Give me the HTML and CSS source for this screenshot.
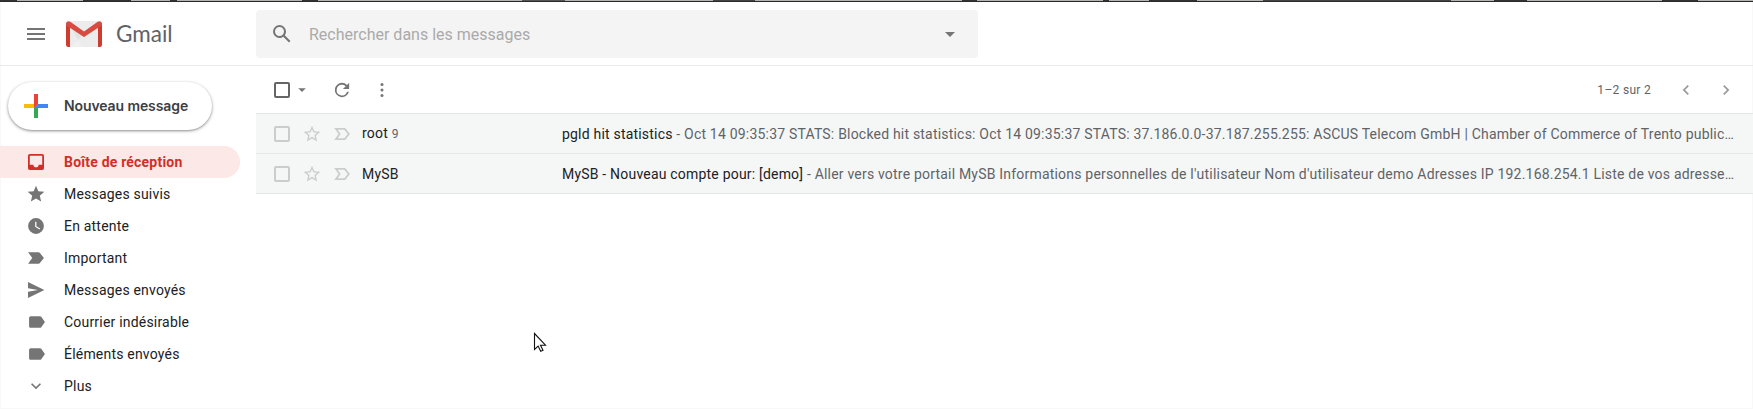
FILE: index.html
```html
<!DOCTYPE html>
<html lang="fr">
<head>
<meta charset="utf-8">
<title>Gmail</title>
<link rel="stylesheet" href="styles.css">
</head>
<body>
<div class="app">
  <div class="strip"></div>
  <header class="header">
    <div class="brand">
      <svg class="burger" width="24" height="24" viewBox="0 0 24 24"><path d="M3 18h18v-2H3v2zm0-5h18v-2H3v2zm0-7v2h18V6H3z"/></svg>
      <svg class="logo" width="36" height="26" viewBox="0 0 36 26">
        <rect x="1" y="0" width="34" height="26" rx="1.500" fill="#ececec"/>
        <path d="M4 26l14-11 14 11z" fill="#f3f3f3"/>
        <path d="M18 15l14 11H16L5 6z" fill="#e2e2e2"/>
        <path d="M4 26l12-11 2 1 2-1 12 11z" fill="#efefef" opacity=".8"/>
        <path d="M0 3v20.500A2.500 2.500 0 0 0 2.500 26H4V5zM36 3v20.500a2.500 2.500 0 0 1-2.500 2.500H32V5z" fill="#ce3c30"/>
        <path d="M0 2.800C0 .3 2.600-.5 4.300.8L18 10.500 31.700.8C33.400-.5 36 .3 36 2.800c0 1-.5 1.800-1.200 2.300L18 16 1.200 5.100C.5 4.600 0 3.800 0 2.800z" fill="#d94b40"/>
      </svg>
      <span class="brand-name">Gmail</span>
    </div>
    <div class="search">
      <svg class="search-icon" width="24" height="24" viewBox="0 0 24 24"><path d="M20.490 19l-5.730-5.730C15.530 12.200 16 10.910 16 9.500A6.500 6.500 0 1 0 9.500 16c1.410 0 2.700-.47 3.770-1.240L19 20.490 20.490 19zM5 9.500C5 7.010 7.010 5 9.500 5S14 7.010 14 9.500 11.990 14 9.500 14 5 11.990 5 9.500z"/></svg>
      <span class="search-text">Rechercher dans les messages</span>
      <svg width="24" height="24" viewBox="0 0 24 24"><path d="M7 10l5 5 5-5z"/></svg>
    </div>
  </header>
  <div class="body">
    <aside class="side">
      <div class="compose">
        <svg width="24" height="24" viewBox="0 0 24 24"><path fill="#34a853" d="M10 14l4-4v14h-4z"/><path fill="#4285f4" d="M14 10h10v4H10z"/><path fill="#ea4335" d="M10 0h4v10l-4 4z"/><path fill="#fbbc05" d="M0 10h10v4H0z"/></svg>
        <span>Nouveau message</span>
      </div>
      <nav class="nav">
        <div class="item active"><svg width="20" height="20" viewBox="0.750 0.750 22.500 22.500"><path d="M19 3H5a2 2 0 0 0-2 2v14a2 2 0 0 0 2 2h14a2 2 0 0 0 2-2V5a2 2 0 0 0-2-2zm0 12h-4c0 1.660-1.340 3-3 3s-3-1.340-3-3H5V5h14v10z"/></svg><span>Boîte de réception</span></div>
        <div class="item"><svg width="20" height="20" viewBox="0 0 24 24"><path d="M12 17.270L18.180 21l-1.640-7.030L22 9.240l-7.190-.61L12 2 9.190 8.630 2 9.240l5.460 4.730L5.820 21z"/></svg><span>Messages suivis</span></div>
        <div class="item"><svg width="20" height="20" viewBox="0 0 24 24"><path d="M12 2.500a9.500 9.500 0 1 0 0 19 9.500 9.500 0 0 0 0-19zm4.200 13.700L11 13V7h1.500v5.200l4.500 2.700-.8 1.300z"/></svg><span>En attente</span></div>
        <div class="item"><svg width="20" height="20" viewBox="0 0 24 24"><path d="M2.500 19H15c.7 0 1.300-.3 1.700-.9L21.500 12l-4.800-6.100c-.4-.6-1-.9-1.700-.9H2.500l5 7z"/></svg><span>Important</span></div>
        <div class="item"><svg width="20" height="20" viewBox="0 0 24 24"><path d="M2.400 21.500L22 12 2.400 2.500V10l12 2-12 2z"/></svg><span>Messages envoyés</span></div>
        <div class="item"><svg width="20" height="20" viewBox="-0.700 0 24 24"><path d="M17.630 5.840A2 2 0 0 0 16 5H5a2 2 0 0 0-2 2v10c0 1.100.9 2 2 2h11c.67 0 1.270-.33 1.630-.84L22 12l-4.370-6.160z"/></svg><span>Courrier indésirable</span></div>
        <div class="item"><svg width="20" height="20" viewBox="-0.700 0 24 24"><path d="M17.630 5.840A2 2 0 0 0 16 5H5a2 2 0 0 0-2 2v10c0 1.100.9 2 2 2h11c.67 0 1.270-.33 1.630-.84L22 12l-4.370-6.160z"/></svg><span>Éléments envoyés</span></div>
        <div class="item"><svg width="20" height="20" viewBox="0 0 24 24"><path d="M16.600 8.600L12 13.200 7.400 8.600 6 10l6 6 6-6z"/></svg><span>Plus</span></div>
      </nav>
    </aside>
    <main class="main">
      <div class="toolbar">
        <span class="check dark"></span>
        <svg class="caret" width="20" height="20" viewBox="0 0 20 20"><path d="M6.200 8.200h7.600L10 12z"/></svg>
        <svg class="reload" width="20" height="20" viewBox="0.800 0.800 22.400 22.400"><path d="M17.650 6.350A7.960 7.960 0 0 0 12 4a8 8 0 1 0 7.730 10h-2.080A6 6 0 1 1 12 6c1.660 0 3.140.69 4.220 1.780L13 11h7V4l-2.350 2.350z"/></svg>
        <svg class="more" width="20" height="20" viewBox="0 0 20 20"><circle cx="10" cy="4.500" r="1.500"/><circle cx="10" cy="10" r="1.500"/><circle cx="10" cy="15.500" r="1.500"/></svg>
        <span class="count">1–2 sur 2</span>
        <svg class="page" width="20" height="20" viewBox="0 0 24 24"><path d="M15.400 7.400L14 6l-6 6 6 6 1.400-1.400L10.800 12z"/></svg>
        <svg class="page" width="20" height="20" viewBox="0 0 24 24"><path d="M10 6L8.600 7.400l4.600 4.600-4.600 4.600L10 18l6-6z"/></svg>
      </div>
      <div class="row">
        <span class="check"></span>
        <svg class="star" width="20" height="20" viewBox="0 0 24 24"><path d="M22 9.240l-7.190-.62L12 2 9.190 8.630 2 9.240l5.460 4.730L5.820 21 12 17.270 18.180 21l-1.630-7.030L22 9.240zM12 15.400l-3.760 2.270 1-4.280-3.320-2.880 4.380-.38L12 6.100l1.710 4.040 4.380.38-3.320 2.880 1 4.280L12 15.400z"/></svg>
        <svg class="imp" width="20" height="20" viewBox="0 0 20 20"><path d="M4 4.900h8.800l4 5.100-4 5.100H4L7.600 10z"/></svg>
        <div class="sender">root <small>9</small></div>
        <div class="line"><b>pgld hit statistics</b> - Oct 14 09:35:37 STATS: Blocked hit statistics: Oct 14 09:35:37 STATS: 37.186.0.0-37.187.255.255: ASCUS Telecom GmbH | Chamber of Commerce of Trento public…</div>
      </div>
      <div class="row">
        <span class="check"></span>
        <svg class="star" width="20" height="20" viewBox="0 0 24 24"><path d="M22 9.240l-7.190-.62L12 2 9.190 8.630 2 9.240l5.460 4.730L5.820 21 12 17.270 18.180 21l-1.630-7.030L22 9.240zM12 15.400l-3.760 2.270 1-4.280-3.320-2.880 4.380-.38L12 6.100l1.710 4.040 4.380.38-3.320 2.880 1 4.280L12 15.400z"/></svg>
        <svg class="imp" width="20" height="20" viewBox="0 0 20 20"><path d="M4 4.900h8.800l4 5.100-4 5.100H4L7.600 10z"/></svg>
        <div class="sender">MySB</div>
        <div class="line"><b>MySB - Nouveau compte pour: [demo]</b> - Aller vers votre portail MySB Informations personnelles de l'utilisateur Nom d'utilisateur demo Adresses IP 192.168.254.1 Liste de vos adresse…</div>
      </div>
    </main>
  </div>
  <svg class="cursor" width="14" height="21" viewBox="0 0 14 21"><path d="M1.500 1.500v16l3.600-3.400 2.600 5.200 2.300-1.100-2.500-5H12.500z" fill="#fff" stroke="#111" stroke-width="1.100"/></svg>
</div>
</body>
</html>
```

FILE: styles.css
```css
* { box-sizing: border-box; }
body {
  margin: 0;
  background: #fff;
  color: #202124;
  font: 14px/20px Roboto, sans-serif;
}
svg { display: block; flex: none; fill: #757575; }
.app { position: relative; width: 1753px; height: 409px; overflow: hidden; display: flex; flex-direction: column; box-shadow: inset 0 0 0 1px #f8f8f8; }
.strip {
  height: 2px;
  flex: none;
  border-bottom: 1px solid #2a2a2a;
  background: linear-gradient(90deg,
    #333 17px, #b4b4b0 17px 83px, #333 83px 131px, #b4b4b0 131px 170px,
    #333 170px 177px, #b4b4b0 177px 302px, #333 302px 318px, #b4b4b0 318px 522px,
    #555 522px 565px, #b4b4b0 565px 713px, #444 713px 755px, #b4b4b0 755px 962px,
    #333 962px 977px, #b4b4b0 977px 1103px, #333 1103px 1109px, #b4b4b0 1109px 1149px,
    #333 1149px 1197px, #b4b4b0 1197px 1263px, #444 1263px 1451px, #b4b4b0 1451px 1494px,
    #333 1494px 1527px, #b4b4b0 1527px 1662px, #333 1662px 1698px, #b4b4b0 1698px);
}
.header { display: flex; height: 64px; flex: none; border-bottom: 1px solid #e8ebeb; }
.brand { width: 256px; display: flex; align-items: center; padding: 0 0 0 24px; height: 64px; }
.logo { margin: 0 0 0 18px; }
.brand-name { margin-left: 14px; color: #5f6368; font: 22.5px/24px Lato, sans-serif; }
.search {
  width: 722px; height: 48px; margin-top: 8px; padding: 0 16px 0 14px;
  display: flex; align-items: center;
  border-radius: 4px; background: #f4f4f4;
}
.search-text { flex: 1; margin-left: 15px; padding-top: 2px; color: #aaa; font-size: 16px; }
.body { display: flex; flex: 1; }
.side { width: 256px; padding-top: 16px; flex: none; }
.compose {
  display: flex; align-items: center; gap: 16px;
  width: 204px; height: 48px; margin-left: 8px; padding-left: 16px;
  border-radius: 24px;
  box-shadow: 0 1px 2px rgba(60,64,67,.4), 0 1px 3px 1px rgba(60,64,67,.18);
  color: #3c4043; font: 600 14px/20px Inter, sans-serif;
}
.compose span { letter-spacing: -.1px; }
.nav { margin-top: 16px; letter-spacing: .2px; }
.item { display: flex; align-items: center; gap: 18px; width: 240px; height: 32px; padding-left: 26px; }
.item.active { border-radius: 0 16px 16px 0; background: #fce8e6; color: #d03028; font-weight: 700; }
.item.active svg { fill: #d03028; }
.main { flex: 1; min-width: 0; }
.toolbar { display: flex; align-items: center; height: 47px; padding: 0 17px 0 18px; }
.check { width: 16px; height: 16px; border: 2px solid #cbcdcd; border-radius: 2px; flex: none; }
.check.dark { border-color: #666; }
.caret { margin-left: 2px; }
.reload { margin-left: 20px; }
.more { margin-left: 20px; }
.count { margin-left: auto; color: #5f6368; font-size: 12px; letter-spacing: .3px; }
.page { margin-left: 25px; fill: #999; }
.page + .page { margin-left: 20px; }
.row {
  display: flex; align-items: center;
  height: 40px; padding: 1px 0 0 18px;
  background: #f5f7f6;
  box-shadow: inset 0 1px #e3e7e7, 0 1px #e3e7e7;
}
.star { margin-left: 12px; fill: #cbcdcd; }
.imp { margin-left: 10px; fill: none; stroke: #cbcdcd; stroke-width: 1.800; }
.sender { width: 200px; margin-left: 10px; flex: none; letter-spacing: .2px; }
.sender small { font-size: 12px; color: #5f6368; }
.line { white-space: nowrap; color: #5f6368; letter-spacing: .2px; }
.line b { font-weight: 400; color: #202124; }
.cursor { position: absolute; left: 533px; top: 332px; }
```
